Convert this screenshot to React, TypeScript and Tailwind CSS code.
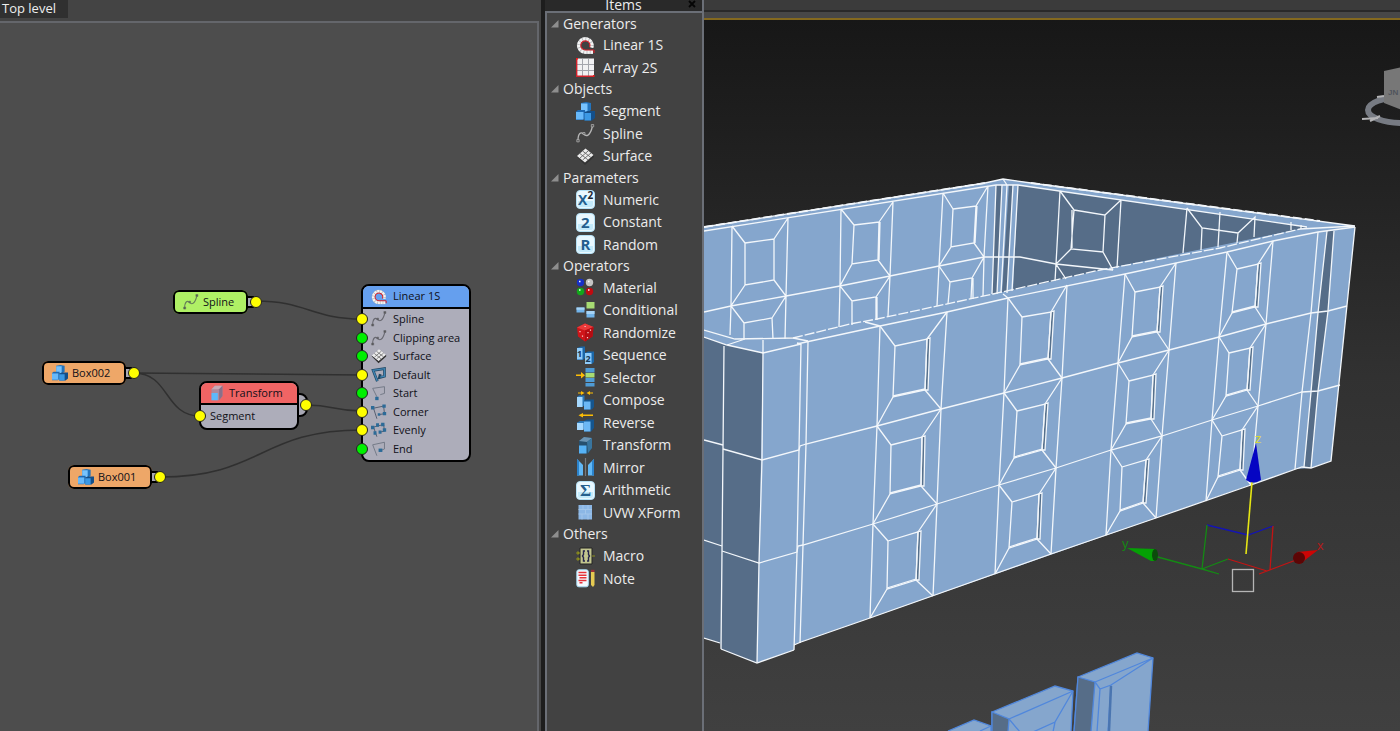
import type { ReactNode } from "react";
import clsx from "clsx";

type Pt = [number, number];

const icons: Record<string, ReactNode> = {
  linear: (
    <>
      <path d="M17 16H9.5A6.5 6.5 0 1 1 15.5 11.5" fill="none" stroke="#b8babd" strokeWidth="4" />
      <path d="M17 16H9.5A6.5 6.5 0 1 1 15.5 11.5" fill="none" stroke="#f4f4f4" strokeWidth="3.4" strokeDasharray="2.4 .8" />
      <path d="M18 14H9.5A4.6 4.6 0 1 1 13.6 11.3M18 14v3" fill="none" stroke="#d3222b" strokeWidth="1.2" />
    </>
  ),
  array: (
    <>
      <rect x=".5" y=".5" width="17.5" height="17.5" fill="#f1f1f3" />
      <path d="M6.500 1v17M12.500 1v17M1 6.500h17M1 12.500h17" stroke="#a4a6ad" fill="none" />
      <path d="M.7 0v18.300H18" stroke="#d3222b" strokeWidth="1.400" fill="none" />
      <path d="M0 .5h2M17 18h1.500" stroke="#f21a1a" strokeWidth="2" />
    </>
  ),
  segment: (
    <>
      <path d="M5 1l5-1 5 1v7l-3 2H5z" fill="#2374bd" />
      <path d="M5 1.500h6.500v8H5z" fill="#78c3fd" />
      <path d="M0 9.500L2 8h7v8l-2 2H0z" fill="#1d69b3" />
      <path d="M0 10h7.500v7.500H0z" fill="#67b9fa" />
      <path d="M8.500 10.500l3-1.500h7.500v7l-3 2.500H8.500z" fill="#144f8a" />
      <path d="M8.500 11h6.500v7.500H8.500z" fill="#3b98e4" />
    </>
  ),
  spline: (
    <>
      <path d="M2 16.500C2 9 5 7.500 7.500 10S14 13 16.500 2" fill="none" stroke="currentColor" strokeWidth="1.300" />
      <path d="M.8 15.500h2.400v2.400H.8zM7 8.500h2v2H7zM15.300.5h2.400v2.400h-2.400z" fill="#555" stroke="currentColor" strokeWidth=".7" />
    </>
  ),
  surface: (
    <>
      <path d="M1 10l8 8L18 10V8l-9 7-8-6z" fill="#333" />
      <path d="M9.500 1.500L17.500 8 9 15.500 1 9z" fill="#ececec" />
      <path d="M6.600 4l8.300 6.500M3.900 6.500l8 6.300M12.300 3.800L4 11M15 6L6.600 13" stroke="#666" strokeWidth=".9" fill="none" />
    </>
  ),
  material: (
    <>
      <circle cx="4.500" cy="4.500" r="3.700" fill="#1730c8" />
      <circle cx="13.500" cy="4.500" r="3.700" fill="#c4c4c4" />
      <circle cx="4.500" cy="13.500" r="3.700" fill="#12a81a" />
      <circle cx="13.500" cy="13.500" r="3.700" fill="#c00a10" />
      <path d="M3 3.500h1.500M12 3.500h1.500M3 12h1.500M12 12h1.500" stroke="#fff" strokeWidth="1.300" />
    </>
  ),
  conditional: (
    <>
      <path d="M.5 6.500h8v5h-8z" fill="#72b4ea" />
      <path d="M10.500 1h8v6.500h-8z" fill="#a8dc73" />
      <path d="M10.500 10h8v6.500h-8z" fill="#72b4ea" />
      <path d="M.5 6.500h8v2.200h-8zM10.500 10h8v3h-8z" fill="#a6d3f5" />
    </>
  ),
  randomize: (
    <>
      <path d="M9 .5l8.500 3.500-1 9.500L9 18.500l-7-5L1 4.500z" fill="#cf1519" />
      <path d="M9 .5l8.500 3.500L9 7.500l-8-3z" fill="#ea3a3a" />
      <path d="M9 7.500L17.500 4l-1 9.500L9 18.500z" fill="#b50c12" />
      <path d="M8.500 3.500h1.200M4 8v1.200M6.500 12.500v1.200M12 9v1.200M14.500 6.500v1.200M11.500 14v1.200" stroke="#fbd0d0" strokeWidth="1.200" />
    </>
  ),
  sequence: (
    <>
      <path d="M1 2l4-1.500h4V12l-2 2H1z" fill="#1b67a8" />
      <path d="M1 2h5.500v11.500H1z" fill="#8ecbfa" />
      <path d="M9 7l3-1.500h6V16l-2 2H9z" fill="#1b67a8" />
      <path d="M9 7h6.500v11H9z" fill="#8ecbfa" />
      <text x="1" y="11" fontSize="9" fontWeight="700" fill="#183a58">1</text>
      <text x="9.500" y="16" fontSize="9" fontWeight="700" fill="#183a58">2</text>
    </>
  ),
  selector: (
    <>
      <path d="M9.500 0h9v4.500h-9zM9.500 10h9v4h-9zM9.500 15h9v3.500h-9z" fill="#4f9bd5" />
      <path d="M9.500 5h9v4.500h-9z" fill="#a8dc73" />
      <path d="M0 6.500h5V4l4 3.300-4 3.200V8H0z" fill="#fdbd05" />
    </>
  ),
  compose: (
    <>
      <path d="M1 6l2-1.500h5.500V14l-2 2H1z" fill="#2b78b8" />
      <path d="M1 6h5.500v10H1z" fill="#a6d9ff" />
      <path d="M8 10l2-1.500h8V16l-2 2.500H8z" fill="#15568f" />
      <path d="M8 10.500h6.500v8H8z" fill="#6cb8f5" />
      <path d="M2 1.500h3V0l3.500 2L5 4V2.500H2zM17 1.500h-3V0l-3.500 2L14 4V2.500h3z" fill="#fdbd05" />
    </>
  ),
  reverse: (
    <>
      <path d="M1 9.500L4 8h4v8H1z" fill="#2b78b8" />
      <path d="M1 10h6.500v7H1z" fill="#a6d9ff" />
      <path d="M8 8l3-1.500h7V15l-3 3.500H8z" fill="#15568f" />
      <path d="M8 8.500h6.500v10H8z" fill="#6cb8f5" />
      <path d="M17 1.500H7V0L2.500 2.200 7 4.500V3h10z" fill="#fdbd05" />
    </>
  ),
  transform: (
    <>
      <path d="M3 5l5-4 8 1v10l-4 5.500H3z" fill="#26506f" />
      <path d="M3 5l5-4 8 1-5 4z" fill="#6b94b3" />
      <path d="M11 6l5-4v10l-4 5z" fill="#39759e" />
      <path d="M3 9.500h7.500v8H3z" fill="#56b2f6" />
    </>
  ),
  transformNode: (
    <>
      <path d="M3 5l4-4h9v12l-4 5H3z" fill="#b08a9c" />
      <path d="M3 5l4-4h9l-4 4z" fill="#c9a9b6" />
      <path d="M12 5l4-4v12l-4 5z" fill="#8a708a" />
      <path d="M3 9.500h7.500V18H3z" fill="#5db9fb" />
    </>
  ),
  mirror: (
    <>
      <path d="M1 1l6 6v10.500H1z" fill="#61b7f5" />
      <path d="M1 1l2 2v14.500H1z" fill="#2b83cc" />
      <path d="M18 1l-6 6v10.500h6z" fill="#61b7f5" />
      <path d="M18 1l-2 2v14.500h2z" fill="#2b83cc" />
      <path d="M9.500 0v18" stroke="#75797e" strokeWidth="1.200" />
    </>
  ),
  uvw: (
    <>
      <path d="M2.500 2h13.500v14.500H2.500z" fill="#8cb7e5" />
      <path d="M2.500 6.500H16M2.500 11H16M7 2v4.500M12 2v4.500M9.500 6.500V11M6 11v5.500M12 11v5.500" stroke="#a4c6ea" strokeWidth=".9" fill="none" />
    </>
  ),
  macro: (
    <>
      <path d="M4 1h12v16H4z" fill="#c2c58f" stroke="#222" />
      <path d="M0 6h4M0 12h4M16 9h3M1.500 4.500L3 6 1.500 7.500M1.500 10.500L3 12l-1.500 1.500" stroke="#8c8e1c" fill="none" strokeWidth="1.200" />
      <path d="M9 4H7.500v3.500L6.500 9l1 1.500V14H9M11 4h1.500v3.500l1 1.500-1 1.500V14H11" stroke="#25254b" strokeWidth="1.400" fill="none" />
    </>
  ),
  note: (
    <>
      <rect x=".8" y=".8" width="11.500" height="17" rx="2" fill="#f6fbff" stroke="#a9dcf6" />
      <path d="M2.500 3.500h8M2.500 6.200h8M3.500 8.800h7M2.500 11.400h8M3.500 13.800h3" stroke="#e6333a" strokeWidth="1.500" />
      <path d="M15 3h3.500v13L17 18l-2-2z" fill="#e5ca52" />
      <path d="M15 .8h3.500V3H15z" fill="#9b3037" />
    </>
  ),
  default: (
    <>
      <path d="M7.500 17L2.500 4 16 2v9l-6 1.500 1-4" fill="none" stroke="#1f4763" strokeWidth="3.200" />
      <path d="M7.500 16.500L2.500 4 16 2v9l-5 1" fill="none" stroke="#4185b3" strokeWidth="1.600" />
    </>
  ),
  start: (
    <>
      <path d="M7 14L2 4l14-2v8l-5 1.500" fill="none" stroke="#707784" strokeWidth="1.100" />
      <rect x="5" y="14" width="4" height="4" fill="#2c6b98" />
    </>
  ),
  corner: (
    <>
      <path d="M7 17.500L3 5l12-2.500 1 9-6 1" fill="none" stroke="#50596a" strokeWidth="1.100" />
      <path d="M0 2.500h4v4H0zM13.500.5h4v4h-4zM14 9.500h4v4h-4zM8 11h3v3H8z" fill="#2c6b98" />
    </>
  ),
  evenly: (
    <>
      <path d="M7 17.500L3 6l12-3 1 8-6 1" fill="none" stroke="#50596a" strokeWidth="1.100" />
      <path d="M0 4.500h4v4H0zM6 1.500h3.500v4H6zM12 1h4v4h-4zM14 7.500h4v4h-4zM9 10h3.500v4H9zM3 11h3.500v4H3z" fill="#2c6b98" />
    </>
  ),
  end: (
    <>
      <path d="M7 17.500L2 4.500l14-3v8l-5 2" fill="none" stroke="#707784" strokeWidth="1.100" />
      <rect x="9" y="9" width="4.500" height="4" fill="#2c6b98" />
    </>
  ),
};

const tiles: Record<string, ReactNode> = {
  numeric: (
    <>
      <text x="2" y="15" fontSize="14">X</text>
      <text x="11.500" y="8.500" fontSize="10" fill="#1b2530">2</text>
    </>
  ),
  constant: <text x="5" y="15" fontSize="15">2</text>,
  random: <text x="4.500" y="15" fontSize="15">R</text>,
  arithmetic: <text x="4" y="15" fontSize="17" fontFamily="Liberation Serif, serif">Σ</text>,
};

function Icon({ name, className }: { name: string; className?: string }) {
  const tile = tiles[name];
  return (
    <svg viewBox="0 0 19 19" className={clsx("shrink-0", className)} fontFamily="Open Sans, sans-serif" aria-hidden="true">
      {tile ? (
        <g fontWeight="700" fill="#245f8e">
          <rect x=".5" y=".5" width="18" height="18" rx="3.500" fill="#e9f8ff" stroke="#b4e0f5" />
          <path d="M2 11h15v4q0 2-2 2H4q-2 0-2-2z" fill="#c3eafb" />
          {tile}
        </g>
      ) : (
        icons[name]
      )}
    </svg>
  );
}

const groups = [
  { title: "Generators", items: [["linear", "Linear 1S"], ["array", "Array 2S"]] },
  { title: "Objects", items: [["segment", "Segment"], ["spline", "Spline"], ["surface", "Surface"]] },
  { title: "Parameters", items: [["numeric", "Numeric"], ["constant", "Constant"], ["random", "Random"]] },
  {
    title: "Operators",
    items: [
      ["material", "Material"],
      ["conditional", "Conditional"],
      ["randomize", "Randomize"],
      ["sequence", "Sequence"],
      ["selector", "Selector"],
      ["compose", "Compose"],
      ["reverse", "Reverse"],
      ["transform", "Transform"],
      ["mirror", "Mirror"],
      ["arithmetic", "Arithmetic"],
      ["uvw", "UVW XForm"],
    ],
  },
  { title: "Others", items: [["macro", "Macro"], ["note", "Note"]] },
];

function ItemsPanel() {
  return (
    <aside className="w-[159px] shrink-0 flex flex-col bg-[#424242] text-[#ececec] border-r-2 border-[#6b6f77]">
      <header className="h-[13px] flex items-start justify-center relative bg-[#292929] border-b-2 border-[#6b6f77]">
        <h2 className="text-sm leading-[9px]">Items</h2>
        <button aria-label="Close" className="absolute right-1 top-0 w-3 h-2 flex items-center justify-center">
          <svg viewBox="0 0 8 8" className="w-2 h-2">
            <path d="M1 1l6 6M7 1L1 7" stroke="#050505" strokeWidth="1.800" />
          </svg>
        </button>
      </header>
      <div className="h-[577px] flex flex-col border-l-2 border-[#6b6f77] text-sm">
        {groups.map((g) => (
          <section key={g.title} className="contents">
            <button className="h-[21px] shrink-0 flex items-center gap-1 pl-1 text-left">
              <svg viewBox="0 0 8 8" className="w-2 h-2">
                <path d="M7.500 0v7.500H0z" fill="#8e8e8e" />
              </svg>
              {g.title}
            </button>
            <ul className="contents">
              {g.items.map(([icon, label]) => (
                <li key={label} className="flex-1 flex">
                  <button className="flex-1 flex items-center gap-2 pl-[29px] text-left">
                    <Icon name={icon} className="w-[19px] h-[19px] text-[#b5b5b5]" />
                    {label}
                  </button>
                </li>
              ))}
            </ul>
          </section>
        ))}
      </div>
      <div className="flex-1 border-l-2 border-[#6b6f77]" />
    </aside>
  );
}

function Port({ on, className }: { on?: boolean; className: string }) {
  return (
    <span
      className={clsx("absolute w-3 h-3 rounded-full border border-[#222]", on ? "bg-[#ffff00]" : "bg-[#00f000]", className)}
    />
  );
}

function Pill({ icon, label, className }: { icon: string; label: string; className: string }) {
  return (
    <div className={clsx("absolute h-6 flex", className)}>
      <span className="absolute -right-[6px] top-[6px] w-3 h-3 bg-[#a9a9b5] border-2 border-black" />
      <div className="relative flex-1 flex items-center gap-1 pl-2 rounded-md border-2 border-black bg-inherit">
        <Icon name={icon} className="w-4 h-4 text-[#668058]" />
        {label}
      </div>
      <Port on className="-right-[14px] top-[6px]" />
    </div>
  );
}

const inputs: [string, string, boolean][] = [
  ["spline", "Spline", true],
  ["spline", "Clipping area", false],
  ["surface", "Surface", false],
  ["default", "Default", true],
  ["start", "Start", false],
  ["corner", "Corner", true],
  ["evenly", "Evenly", true],
  ["end", "End", false],
];

function NodeEditor() {
  return (
    <section className="w-[calc(39%-1px)] shrink-0 flex flex-col bg-[#444] border-r-4 border-[#1d1d1d]">
      <header className="h-[21px] flex text-[13px]">
        <button className="h-[18px] w-17 pl-[2px] flex items-center text-left bg-[#303030] text-[#eee]">Top level</button>
      </header>
      <div className="relative flex-1 mr-[2px] border-t-2 border-r-2 border-[#64666b] bg-[#4d4d4d] overflow-hidden text-[11px] text-[#101018]">
        <svg className="absolute inset-0 w-full h-full" aria-hidden="true">
          <g fill="none" stroke="#303030" strokeWidth="1.500">
            <path d="M256 278C306 278 312 296 362 296" />
            <path d="M134 350L362 352" />
            <path d="M134 350C170 350 164 393 200 393" />
            <path d="M306 382C335 382 333 388 362 388" />
            <path d="M160 454C262 454 260 407 362 407" />
          </g>
        </svg>

        <Pill icon="spline" label="Spline" className="left-[173px] top-[267px] w-[75px] rounded-md bg-[#aff065]" />
        <Pill icon="segment" label="Box002" className="left-[42px] top-[338px] w-[84px] rounded-md bg-[#eea768]" />
        <Pill icon="segment" label="Box001" className="left-[68px] top-[442px] w-[84px] rounded-md bg-[#eea768]" />

        {/* Transform */}
        <div className="absolute left-[199px] top-[358px] w-[100px] h-[49px]">
          <span className="absolute -right-[9px] top-3 w-4 h-6 rounded-r-lg border-2 border-black bg-[#a9a9b5]" />
          <div className="relative h-full flex flex-col rounded-lg border-2 border-black bg-[#adadba] overflow-hidden">
            <div className="h-[22px] flex items-center gap-1 pl-2 border-b-2 border-black bg-[#f06464]">
              <Icon name="transformNode" className="w-4 h-4" />
              Transform
            </div>
            <div className="flex-1 flex items-center pl-[9px]">Segment</div>
          </div>
          <Port on className="-left-[5px] top-[29px]" />
          <Port on className="-right-[13px] top-[18px]" />
        </div>

        {/* Linear 1S */}
        <div className="absolute left-[361px] top-[261px] w-[110px] h-[178px] flex flex-col rounded-lg border-2 border-black bg-[#adadba]">
          <div className="h-[23px] flex items-center gap-[6px] pl-2 rounded-t-md border-b-2 border-black bg-[#659fee]">
            <Icon name="linear" className="w-4 h-4" />
            Linear 1S
          </div>
          <ul className="h-[149px] pt-px flex flex-col">
            {inputs.map(([icon, label, on]) => (
              <li key={label} className="relative flex-1 flex items-center gap-[6px] pl-2">
                <Port on={on} className="-left-[7px]" />
                <Icon name={icon} className="w-4 h-4 text-[#686870]" />
                {label}
              </li>
            ))}
          </ul>
        </div>
      </div>
    </section>
  );
}

const toPoints = (pts: Pt[]) => pts.map((p) => p.join(",")).join(" ");

// One column of front panels: outer edges from top to bottom, and the window corners of each row
const columns: { left: Pt[]; right: Pt[]; windows: Pt[][] }[] = [
  {
    left: [[880, 326], [877, 426], [873, 524], [870, 618]],
    right: [[947, 312], [941, 409], [937, 504], [933, 596]],
    windows: [
      [[895, 346], [927, 339], [925, 390], [893, 397]],
      [[891, 445], [922, 437], [921, 486], [890, 494]],
      [[888, 541], [918, 532], [916, 580], [887, 589]],
    ],
  },
  {
    left: [[1008, 298], [1004, 393], [999, 485], [995, 574]],
    right: [[1067, 285], [1062, 378], [1056, 468], [1051, 554]],
    windows: [
      [[1022, 317], [1051, 312], [1048, 359], [1020, 365]],
      [[1017, 411], [1045, 404], [1042, 450], [1014, 458]],
      [[1012, 502], [1039, 494], [1037, 539], [1009, 548]],
    ],
  },
  {
    left: [[1125, 274], [1118, 363], [1111, 450], [1106, 535]],
    right: [[1176, 263], [1169, 350], [1162, 436], [1156, 518]],
    windows: [
      [[1135, 292], [1160, 287], [1157, 332], [1132, 337]],
      [[1129, 381], [1153, 375], [1151, 419], [1126, 424]],
      [[1122, 467], [1146, 460], [1143, 503], [1120, 511]],
    ],
  },
  {
    left: [[1227, 252], [1219, 337], [1212, 420], [1206, 501]],
    right: [[1273, 241], [1266, 324], [1258, 406], [1251, 485]],
    windows: [
      [[1237, 269], [1258, 264], [1255, 307], [1232, 313]],
      [[1229, 353], [1250, 348], [1247, 390], [1226, 396]],
      [[1222, 436], [1242, 430], [1240, 470], [1218, 477]],
    ],
  },
];

function Column({ left, right, windows }: (typeof columns)[number]) {
  return (
    <g>
      <polyline points={toPoints(left)} />
      <polyline points={toPoints(right)} />
      {windows.map((w, i) => {
        const [a, b, c, d] = w;
        return (
          <g key={i}>
            <polygon points={toPoints([b, [b[0] + 3, b[1] - 1], [c[0] + 3, c[1]], c])} fill="#56708c" />
            <polygon points={toPoints(w)} />
            <path d={`M${a}L${left[i]}M${b}L${right[i]}M${c}L${right[i + 1]}M${d}L${left[i + 1]}`} />
            <path d={`M${d[0]} ${d[1] - 1}L${c[0]} ${c[1] - 1}`} />
          </g>
        );
      })}
    </g>
  );
}

function Scene() {
  return (
    <svg viewBox="704 20 696 711" preserveAspectRatio="xMinYMin slice" className="absolute inset-0 w-full h-full" role="img" aria-label="Perspective viewport">
      {/* Fills */}
      <path d="M704 227L985 183 1003 179 1355 226 1300 240 1000 320 704 345z" fill="#85a6cd" />
      <path d="M1018 185L1307 227 1300 229 1100 270 1013 291z" fill="#566d88" />
      <path d="M996 185H1002L997 294H992zM1009 185H1013L1007 293H1002z" fill="#566d88" />
      <path d="M704 330L735 339 793 338 850 324 993 294 1300 229 1355 226 1331 461 1311 468 1296 469 870 618 801 642 794 645 794 650 757 663 704 560z" fill="#85a6cd" />
      <path d="M704 337L727 345 763 353 757 663 721 649 720 643 704 638z" fill="#566d88" />
      <path d="M1327 231H1334L1328 311 1318 391 1311 468 1304 467 1311 392 1318 313z" fill="#566d88" />

      <g fill="none" stroke="#f3f7fb" strokeWidth="1.300">
        {/* Back walls */}
        <path d="M704 227L985 183 1003 179 1031 183 1355 226M704 231L996 185M1003 179L1007 185M996 185H1018L1307 227M1300 229L1355 226" />
        <path d="M704 227L985 183M1031 183L1320 221" strokeDasharray="9 3" strokeWidth="1.800" />
        <path d="M704 312L731 306 786 296 840 286 890 276 939 266 984 257H1020L1056 264 1113 270" />
        <path d="M732 226L731 306 730 335M788 218L786 296 785 339M745 243L774 239V280L745 285zM732 226L745 243M788 218L774 239M774 280L786 296 772 318 744 323 731 306 745 285M744 323V340M772 318L773 339" />
        <path d="M841 209L840 286 839 327M893 202L890 276 888 316M854 225L879 222 878 260 852 264zM841 209L854 225M893 202L879 222M878 260L890 276 876 297 852 301 840 286 852 264M852 301V325M876 297V320M880 222L879 260M877 297V320" />
        <path d="M943 193L939 266 937 306M988 186L984 257 983 296M953 209L976 206 974 243 951 247zM943 193L953 209M988 186L976 206M974 243L984 257 972 278 950 282 939 266 951 247M950 282L948 304M972 278L971 299M977 206L975 243M973 278V299" />
        <path d="M996 185L992 294M1002 185L997 294M1007 185L1001 293M1013 185L1007 293M1018 185L1012 291" />
        <path d="M1060 191L1056 264 1055 281M1121 200L1117 268M1074 210L1105 215 1103 252 1071 249zM1060 191L1074 210M1121 200L1105 215M1103 252L1113 270M1071 249L1056 264 1066 279M1072 210V248" />
        <path d="M1187 208L1183 253M1187 208L1202 228 1238 233 1255 217 1254 237M1202 228L1201 250M1238 233L1237 243M1220 212L1218 247M1291 222V230M1301 225V229" />

        {/* Rim */}
        <path d="M793 338L850 324 877 319 993 294 1100 270 1220 248 1300 229" strokeDasharray="10 2" />
        <path d="M797 344L880 326 947 312 1008 298 1125 274 1227 252 1273 241 1318 232 1355 227M865 322L880 326M1003 294L1008 298M793 338L808 341" />
        <path d="M704 330L735 339 793 338M704 337L727 345 763 353 801 344 797 343M727 345L745 339M763 353V340" />

        {/* Pillars */}
        <path d="M724 346L723 449 722 551 721 649M763 353L762 460 759 563 757 663M801 344L799 450 797 552 794 650M808 341L806 444 803 545 800 643" />
        <path d="M704 638L720 643M721 649L757 663 794 650M794 645L801 642 870 618 1051 554 1156 518 1251 485 1296 469 1302 467 1311 468 1331 461 1355 227" />
        <path d="M1318 232L1311 313 1302 392 1295 469M1327 231L1318 313 1311 392 1304 467M1334 231L1328 311 1318 391 1311 468" />

        {/* Row lines */}
        <path d="M704 440L723 445M723 449L762 460 799 450 800 446 806 444 877 426 941 409 1004 393 1062 378 1118 363 1169 350 1219 337 1266 324 1311 313 1328 311 1347 306" />
        <path d="M704 540L722 546M722 551L759 563 797 552 798 546 803 545 873 524 937 504 999 485 1056 468 1111 450 1162 436 1212 420 1258 406 1302 392 1318 391 1340 385" />

        {columns.map((c) => (
          <Column key={c.left[0][0]} {...c} />
        ))}
      </g>

      {/* Loose segments */}
      <g stroke="#5087dc" strokeWidth="1.300" fill="#85a6cd">
        <path d="M948 731L974 720 991 726V732M980 731L991 726" />
        <path d="M992 712L1055 686 1073 691 1071 732H992z" />
        <path d="M992 712L1009 719 1008 732H992z" fill="#566d88" />
        <path d="M1009 719L1073 691M1009 719L1020 732M1073 691L1055 722 1033 732M1055 722L1053 732" fill="none" />
        <path d="M1078 677L1137 653 1153 658 1148 732H1074z" />
        <path d="M1078 677L1095 682 1091 732H1074z" fill="#566d88" />
        <path d="M1095 682L1153 658 1111 685 1100 689zM1100 689L1097 732M1111 685L1108 732" fill="none" />
        <path d="M1111 686L1109 731" strokeWidth="2.500" stroke="#4a75b0" />
      </g>

      {/* Move gizmo */}
      <g fill="none" strokeWidth="1.300">
        <path d="M1207 525L1248 535 1273 526" stroke="#1414b4" />
        <path d="M1207 525L1202 569M1154 556L1202 569 1219 574M1202 569L1228 559" stroke="#148a14" />
        <path d="M1228 559L1267 571M1273 526L1270 570M1259 574L1296 560" stroke="#c21414" />
        <path d="M1252 482L1246 554" stroke="#e6e614" strokeWidth="1.600" />
        <rect x="1232.500" y="569.500" width="21" height="22" stroke="#b5b5b5" />
      </g>
      <path d="M1256 443L1261 480Q1253 485 1246 480z" fill="#0505c3" />
      <path d="M1127 548L1156 549V561L1151 561z" fill="#05a005" />
      <ellipse cx="1155" cy="555" rx="3" ry="6" fill="#0b4c0b" />
      <path d="M1318 550L1297 552 1300 564z" fill="#cc0505" />
      <ellipse cx="1299" cy="558" rx="6" ry="6" fill="#5c0505" />
      <g fontFamily="Liberation Sans, sans-serif" fontSize="13">
        <text x="1255" y="443" fill="#d8d835">z</text>
        <text x="1122" y="548" fill="#158515">y</text>
        <text x="1317" y="550" fill="#b31b1b">x</text>
      </g>

      {/* View cube */}
      <ellipse cx="1403" cy="110" rx="35" ry="13" fill="none" stroke="#777b83" strokeWidth="6" />
      <path d="M1362 119L1378 118M1377 97L1384 96M1370 121L1380 116" stroke="#b4b4b6" strokeWidth="2" />
      <path d="M1384 71L1402 67V110L1384 103z" fill="#777" />
      <text x="1388" y="95" fontSize="8" fontWeight="700" fontFamily="Liberation Sans, sans-serif" fill="#50545c">JN</text>
    </svg>
  );
}

export default function App() {
  return (
    <main className="min-h-screen flex bg-[#444] overflow-hidden font-['Open_Sans','Noto_Sans',sans-serif]">
      <NodeEditor />
      <ItemsPanel />
      <section className="flex-1 min-w-0 flex flex-col">
        <div className="h-3 bg-[#3b3b3b] border-b-2 border-[#292929]" />
        <div className="h-[6px] bg-[#474747]" />
        <div className="h-[2px] bg-[#84691f]" />
        <div className="relative flex-1 overflow-hidden bg-linear-to-b from-[#171717] via-[#313131] to-[#404040]">
          <Scene />
        </div>
      </section>
    </main>
  );
}
